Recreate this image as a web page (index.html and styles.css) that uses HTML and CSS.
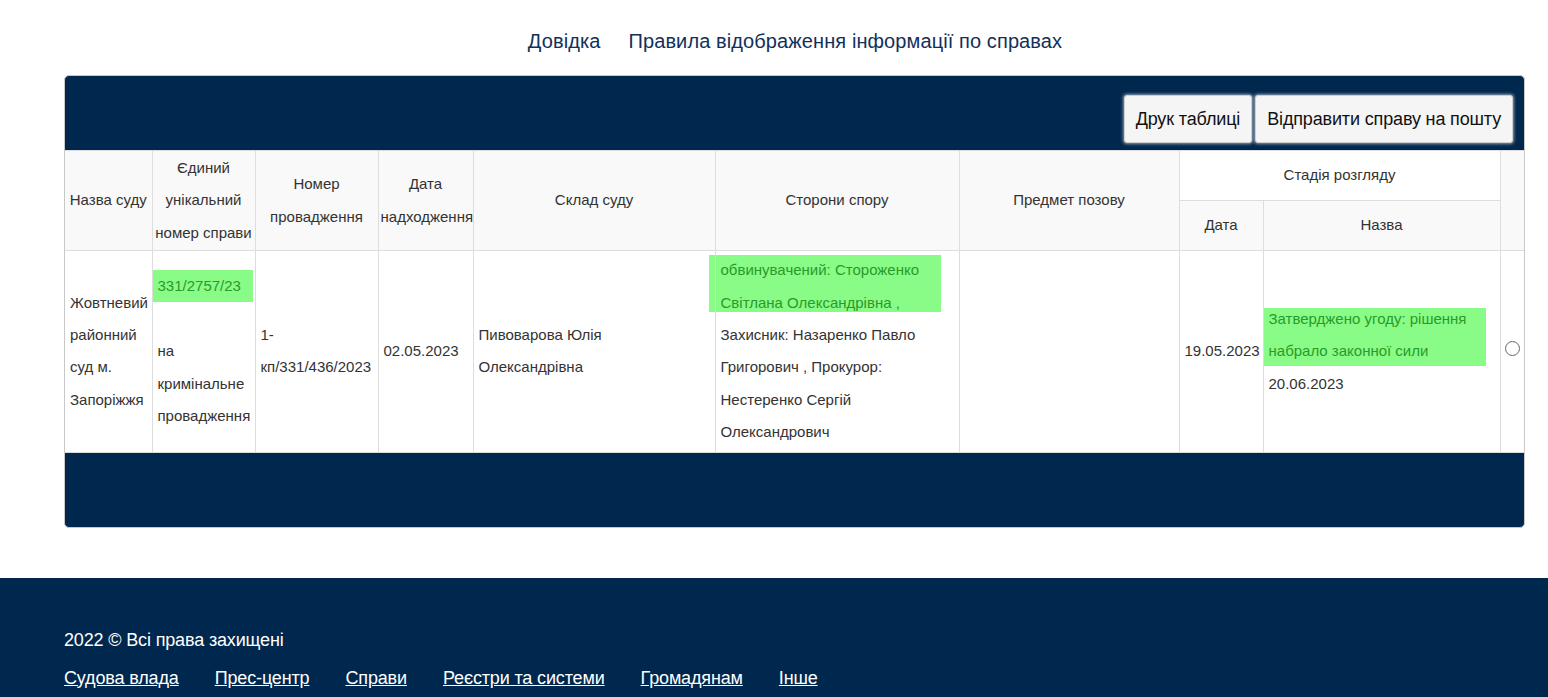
FILE: index.html
```html
<!DOCTYPE html>
<html lang="uk">
<head>
<meta charset="utf-8">
<title>Справа</title>
<link rel="stylesheet" href="styles.css">
</head>
<body>
<nav class="topnav">
  <a href="#" class="topnav-link">Довідка</a>
  <a href="#" class="topnav-link">Правила відображення інформації по справах</a>
</nav>

<div class="panel">
  <div class="panel-head">
    <button class="btn">Друк таблиці</button>
    <button class="btn">Відправити справу на пошту</button>
  </div>
  <table class="cases">
    <colgroup>
      <col class="c1"><col class="c2"><col class="c3"><col class="c4"><col class="c5">
      <col class="c6"><col class="c7"><col class="c8"><col class="c9"><col class="c10">
    </colgroup>
    <thead>
      <tr class="hrow">
        <th rowspan="2">Назва суду</th>
        <th rowspan="2">Єдиний унікальний номер справи</th>
        <th rowspan="2">Номер провадження</th>
        <th rowspan="2">Дата надходження</th>
        <th rowspan="2">Склад суду</th>
        <th rowspan="2">Сторони спору</th>
        <th rowspan="2">Предмет позову</th>
        <th colspan="2" class="th-white">Стадія розгляду</th>
        <th rowspan="2"></th>
      </tr>
      <tr class="hrow">
        <th>Дата</th>
        <th>Назва</th>
      </tr>
    </thead>
    <tbody>
      <tr>
        <td>Жовтневий районний суд м. Запоріжжя</td>
        <td><span class="hl hl-num">331/2757/23</span><br>на кримінальне провадження</td>
        <td>1-кп/331/436/2023</td>
        <td>02.05.2023</td>
        <td>Пивоварова Юлія<br>Олександрівна</td>
        <td><span class="hl hl-parties">обвинувачений: Стороженко Світлана Олександрівна ,</span>Захисник: Назаренко Павло Григорович , Прокурор: Нестеренко Сергій Олександрович</td>
        <td></td>
        <td>19.05.2023</td>
        <td><span class="hl hl-stage">Затверджено угоду: рішення набрало законної сили</span>20.06.2023</td>
        <td class="radio-cell"><span class="radio"></span></td>
      </tr>
    </tbody>
  </table>
  <div class="panel-foot"></div>
</div>

<footer class="footer">
  <p class="copy">2022 © Всі права захищені</p>
  <div class="footer-links">
    <a href="#">Судова влада</a>
    <a href="#">Прес-центр</a>
    <a href="#">Справи</a>
    <a href="#">Реєстри та системи</a>
    <a href="#">Громадянам</a>
    <a href="#">Інше</a>
  </div>
</footer>
</body>
</html>
```

FILE: styles.css
```css
* { box-sizing: border-box; }

html, body {
  margin: 0;
  padding: 0;
  background: #fff;
  font-family: "Liberation Sans", Arial, sans-serif;
  color: #333;
}

.topnav {
  height: 75px;
  display: flex;
  justify-content: center;
  align-items: flex-start;
  gap: 28px;
  padding-top: 30px;
  padding-left: 42px;
}

.topnav-link {
  font-size: 20px;
  line-height: 23px;
  letter-spacing: 0.1px;
  color: #12305a;
  text-decoration: none;
}

.panel {
  margin: 0 23px 0 64px;
  background: #00284e;
  border-radius: 5px;
  border: 1px solid #c8c8c8;
  overflow: hidden;
}

.panel-head {
  height: 74px;
  display: flex;
  justify-content: flex-end;
  align-items: flex-start;
  gap: 3px;
  padding: 19px 11px 0 0;
}

.btn {
  height: 48px;
  padding: 0 11px;
  font-family: "Liberation Sans", Arial, sans-serif;
  font-size: 18px;
  letter-spacing: -0.15px;
  color: #111;
  background: #f5f5f5;
  border: 1px solid #cfcfcf;
  border-radius: 3px;
  box-shadow: 0 0 3px 1px rgba(255, 255, 255, 0.55);
}

.cases {
  width: 100%;
  table-layout: fixed;
  border-collapse: collapse;
  background: #fff;
  font-size: 15px;
}

.c1 { width: 87px; }
.c2 { width: 103px; }
.c3 { width: 123px; }
.c4 { width: 95px; }
.c5 { width: 242px; }
.c6 { width: 244px; }
.c7 { width: 220px; }
.c8 { width: 84px; }
.c9 { width: 237px; }
.c10 { width: 24px; }

.cases th,
.cases td {
  border: 1px solid #dddddd;
}

.cases tr > :first-child { border-left: 0; }
.cases tr > :last-child { border-right: 0; }

.hrow { height: 50px; }

.cases th {
  background: #f9f9f9;
  font-weight: normal;
  color: #333;
  text-align: center;
  vertical-align: middle;
  padding: 1px 2px;
  line-height: 32.4px;
}

.cases th.th-white { background: #fff; }

.cases td {
  text-align: left;
  vertical-align: middle;
  padding: 3px 2px 3px 5px;
  line-height: 32.4px;
  color: #333;
}

.hl {
  display: block;
  color: #2a9a2a;
  background: linear-gradient(#88fc86, #88fc86) no-repeat;
}

.hl-num {
  margin-left: -5px;
  padding-left: 5px;
  background-position: 0 0;
  background-size: 100% calc(100% - 1px);
}

.hl-parties {
  margin-left: -12px;
  padding-left: 12px;
  margin-right: 16px;
  background-position: 0 1px;
  background-size: 100% calc(100% - 8px);
}

.hl-stage {
  margin-left: -6px;
  padding-left: 6px;
  margin-right: 12px;
  background-position: 0 5px;
  background-size: 100% calc(100% - 7px);
}

.cases td.radio-cell { padding: 0; }

.radio {
  display: block;
  width: 15px;
  height: 15px;
  margin: -6px 0 0 4px;
  border: 1.5px solid #666;
  border-radius: 50%;
}

.panel-foot { height: 74px; }

.footer {
  margin-top: 50px;
  background: #00284e;
  padding: 52px 64px 40px;
  color: #fff;
  font-size: 18px;
  line-height: 21px;
  letter-spacing: -0.15px;
}

.copy { margin: 0 0 17px; }

.footer-links {
  display: flex;
  gap: 36px;
}

.footer-links a {
  color: #fff;
  text-decoration: underline;
}
```
